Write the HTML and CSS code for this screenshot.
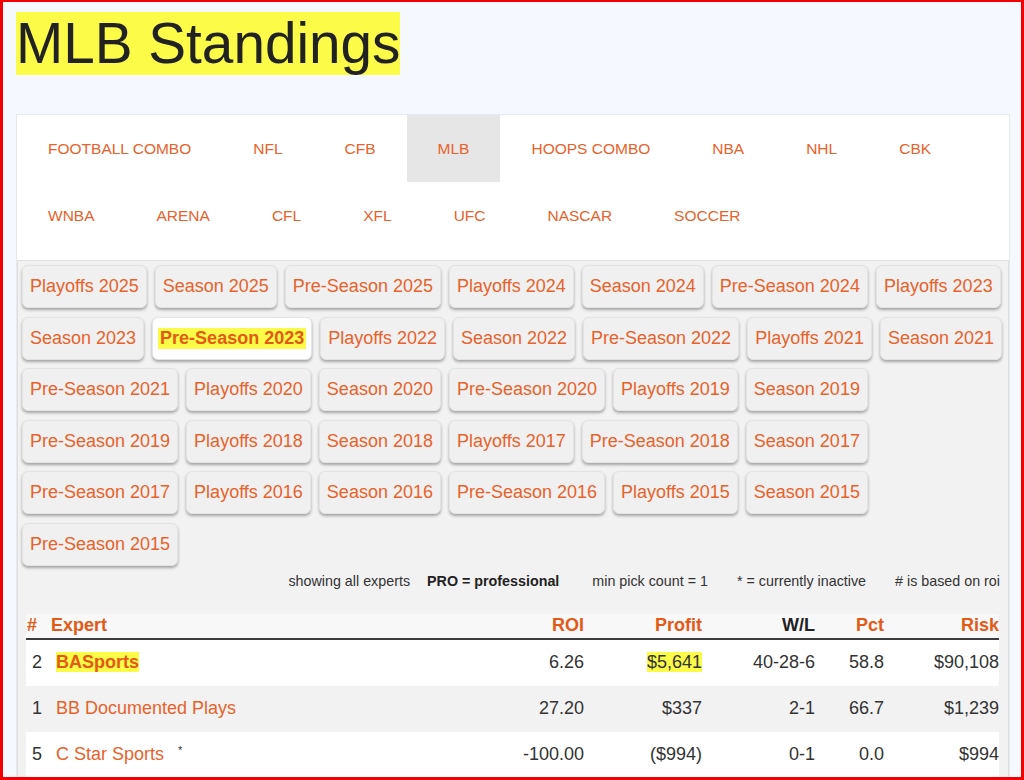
FILE: index.html
```html
<!DOCTYPE html>
<html lang="en">
<head>
<meta charset="utf-8">
<title>MLB Standings</title>
<link rel="stylesheet" href="styles.css">
</head>
<body>
<div class="frame">
  <h1 class="title"><span class="hl">MLB Standings</span></h1>
  <div class="card">
    <nav class="tabs">
      <a class="tab">FOOTBALL COMBO</a>
      <a class="tab">NFL</a>
      <a class="tab">CFB</a>
      <a class="tab active">MLB</a>
      <a class="tab">HOOPS COMBO</a>
      <a class="tab">NBA</a>
      <a class="tab">NHL</a>
      <a class="tab">CBK</a>
      <a class="tab">WNBA</a>
      <a class="tab">ARENA</a>
      <a class="tab">CFL</a>
      <a class="tab">XFL</a>
      <a class="tab">UFC</a>
      <a class="tab">NASCAR</a>
      <a class="tab">SOCCER</a>
    </nav>
    <div class="panel">
      <div class="seasons">
        <a class="btn">Playoffs 2025</a>
        <a class="btn">Season 2025</a>
        <a class="btn">Pre-Season 2025</a>
        <a class="btn">Playoffs 2024</a>
        <a class="btn">Season 2024</a>
        <a class="btn">Pre-Season 2024</a>
        <a class="btn">Playoffs 2023</a>
        <a class="btn">Season 2023</a>
        <a class="btn selected"><span class="mark">Pre-Season 2023</span></a>
        <a class="btn">Playoffs 2022</a>
        <a class="btn">Season 2022</a>
        <a class="btn">Pre-Season 2022</a>
        <a class="btn">Playoffs 2021</a>
        <a class="btn">Season 2021</a>
        <a class="btn">Pre-Season 2021</a>
        <a class="btn">Playoffs 2020</a>
        <a class="btn">Season 2020</a>
        <a class="btn">Pre-Season 2020</a>
        <a class="btn">Playoffs 2019</a>
        <a class="btn">Season 2019</a>
        <a class="btn">Pre-Season 2019</a>
        <a class="btn">Playoffs 2018</a>
        <a class="btn">Season 2018</a>
        <a class="btn">Playoffs 2017</a>
        <a class="btn">Pre-Season 2018</a>
        <a class="btn">Season 2017</a>
        <a class="btn">Pre-Season 2017</a>
        <a class="btn">Playoffs 2016</a>
        <a class="btn">Season 2016</a>
        <a class="btn">Pre-Season 2016</a>
        <a class="btn">Playoffs 2015</a>
        <a class="btn">Season 2015</a>
        <a class="btn">Pre-Season 2015</a>
      </div>
      <div class="info">
        <span class="i1">showing all experts</span>
        <span class="i2 pro">PRO = professional</span>
        <span class="i3">min pick count = 1</span>
        <span class="i4">* = currently inactive</span>
        <span class="i5"># is based on roi</span>
      </div>
      <div class="table">
        <div class="row head">
          <div class="c-num">#</div>
          <div class="c-name">Expert</div>
          <div class="c-r">ROI</div>
          <div class="c-r">Profit</div>
          <div class="c-r dark">W/L</div>
          <div class="c-r">Pct</div>
          <div class="c-r last">Risk</div>
        </div>
        <div class="row body">
          <div class="c-num">2</div>
          <div class="c-name"><a class="link bold"><span class="hl">BASports </span></a></div>
          <div class="c-r">6.26</div>
          <div class="c-r"><span class="hl">$5,641</span></div>
          <div class="c-r">40-28-6</div>
          <div class="c-r">58.8</div>
          <div class="c-r last">$90,108</div>
        </div>
        <div class="row body alt">
          <div class="c-num">1</div>
          <div class="c-name"><a class="link">BB Documented Plays</a></div>
          <div class="c-r">27.20</div>
          <div class="c-r">$337</div>
          <div class="c-r">2-1</div>
          <div class="c-r">66.7</div>
          <div class="c-r last">$1,239</div>
        </div>
        <div class="row body">
          <div class="c-num">5</div>
          <div class="c-name"><a class="link">C Star Sports</a><sup class="inactive">*</sup></div>
          <div class="c-r">-100.00</div>
          <div class="c-r">($994)</div>
          <div class="c-r">0-1</div>
          <div class="c-r">0.0</div>
          <div class="c-r last">$994</div>
        </div>
      </div>
    </div>
  </div>
</div>
</body>
</html>
```

FILE: styles.css
```css
* { box-sizing: border-box; }

html, body {
  margin: 0;
  padding: 0;
}

body {
  font-family: "Liberation Sans", Arial, sans-serif;
  color: #222;
}

.frame {
  height: 780px;
  overflow: hidden;
  border-style: solid;
  border-color: #f20000;
  border-width: 2px 3px 3px 3px;
  background: #f5f8fe;
}

.title {
  margin: 10px 0 0 13px;
  font-size: 56.7px;
  line-height: 63px;
  font-weight: normal;
  color: #222;
}

.hl {
  background: #fbfb48;
}

.card {
  margin: 39px 11px 0 13px;
  border: 1px solid #e6e9ee;
  background: #fff;
  padding-bottom: 40px;
}

.tabs {
  display: flex;
  flex-wrap: wrap;
}

.tab {
  display: block;
  padding: 24px 31px;
  line-height: 19px;
  font-size: 15.5px;
  color: #e8622b;
  text-transform: uppercase;
}

.tab.active {
  background: #e6e6e6;
}

.panel {
  margin-top: 11px;
  border: 1px solid #dedede;
  background: #f2f2f2;
  padding: 4px 2px 0 4px;
}

.seasons {
  display: flex;
  flex-wrap: wrap;
  column-gap: 8px;
  row-gap: 8.6px;
}

.btn {
  display: flex;
  align-items: center;
  height: 43px;
  padding: 0 7px;
  border: 1px solid #e3e3e3;
  border-radius: 6px;
  background: #f0f0f0;
  box-shadow: 0 2px 3px rgba(0, 0, 0, 0.32);
  font-size: 18px;
  color: #e8622b;
  white-space: nowrap;
}

.btn.selected {
  background: #fff;
  padding: 0 5px;
  font-weight: bold;
  color: #e35a17;
}

.btn.selected .mark {
  background: #fbfb48;
  padding: 0 2px;
}

.info {
  display: flex;
  justify-content: flex-end;
  margin: 7px 6px 0 0;
  font-size: 14.3px;
  line-height: 16px;
  color: #333;
}

.info .i2 { margin-left: 17px; }
.info .i3 { margin-left: 33px; }
.info .i4 { margin-left: 29px; }
.info .i5 { margin-left: 29px; }

.pro {
  font-weight: bold;
  color: #222;
}

.table {
  margin: 25px 7px 0 4px;
  font-size: 18px;
}

.row {
  display: grid;
  grid-template-columns: 22px 1fr 84px 118px 113px 69px 115px;
  align-items: center;
}

.row.head {
  height: 26px;
  background: #f8f8f8;
  border-bottom: 2px solid #3c3c3c;
  font-weight: bold;
  color: #e35a17;
  line-height: 23px;
}

.row.head .c-num {
  text-align: left;
  padding-left: 1px;
}

.row.head .c-name {
  padding-left: 3px;
}

.row.head .dark {
  color: #222;
}

.row.body {
  height: 46px;
  background: #fff;
  color: #333;
}

.row.body.alt {
  background: #f2f2f2;
}

.row.body .c-num {
  text-align: center;
}

.row.body .c-name {
  padding-left: 8px;
}

.c-r {
  text-align: right;
}

.link {
  color: #e8622b;
}

.link.bold {
  font-weight: bold;
  color: #e35a17;
}

.inactive {
  font-size: 11px;
  margin-left: 14px;
  color: #333;
  vertical-align: 6px;
}
```
